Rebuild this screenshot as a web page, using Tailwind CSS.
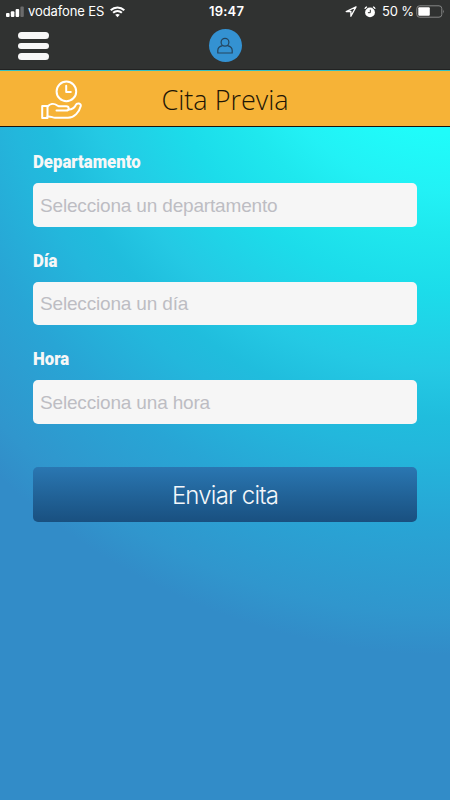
<!DOCTYPE html>
<html lang="es">

<head>
    <meta charset="UTF-8">
    <meta name="viewport" content="width=device-width, initial-scale=1.0">
    <title>Cita Previa</title>
    <script src="https://cdn.jsdelivr.net/npm/@tailwindcss/browser@4"></script>
</head>

<body class="h-[800px] overflow-hidden bg-[radial-gradient(circle_660px_at_450px_-5px,#1ffcfa_0%,#1ffcfa_21%,#22f1f5_30%,#1fe8ee_36%,#1cdcea_45%,#24c9e4_57%,#20bddd_64%,#23b7dc_69%,#28a5d5_80%,#3096cd_94%,#328cc8_100%)] font-['Inter','Liberation_Sans',sans-serif]">
    <header class="h-[70px] bg-[#303231] border-b border-[#222]">
        <!-- Status bar -->
        <div class="relative flex h-[23px] items-center justify-between pl-[6px] pr-[5px] text-white text-[13px]">
            <div class="flex items-center">
                <svg class="mr-[4px]" width="18" height="12" viewBox="0 0 18 12" fill="#fff">
                    <rect x="0" y="7" width="3.6" height="4" rx="1" />
                    <rect x="4.8" y="5.2" width="3.6" height="5.8" rx="1" />
                    <rect x="9.6" y="3" width="3.6" height="8" rx="1" />
                    <rect x="14.4" y="0.5" width="3.4" height="10.5" rx="1" fill="#6b6b6b" />
                </svg>
                <span class="w-[76px] whitespace-nowrap tracking-[-0.1px]">vodafone ES</span>
                <svg class="ml-[6px]" width="15" height="12" viewBox="0 0 15 12" fill="none" stroke="#fff" stroke-width="2">
                    <path d="M.7 4.3C4.6.6 10.4.6 14.3 4.3" />
                    <path d="M3.1 6.8c2.6-2.3 6.2-2.3 8.8 0" />
                    <path d="M5.2 8.7c1.4-1.1 3.2-1.1 4.6 0L7.5 11.2z" fill="#fff" stroke="none" />
                </svg>
            </div>
            <span class="absolute left-[209px] font-semibold text-[13px] tracking-[0.2px]">19:47</span>
            <div class="flex items-center">
                <svg class="mr-[7px]" width="12" height="12" viewBox="0 0 12 12" fill="none" stroke="#fff" stroke-width="1.3" stroke-linejoin="round">
                    <path d="M11 .9L1.2 5.5h4.7v4.8z" />
                </svg>
                <svg class="mr-[6px]" width="12" height="12" viewBox="0 0 12 12" fill="none" stroke="#fff">
                    <circle cx="6" cy="6.4" r="4.9" fill="#fff" stroke="none" />
                    <path d="M.9 2.9Q1.4 1.2 3.1.9M11.1 2.9Q10.6 1.2 8.9.9" stroke-width="1.3" />
                    <path d="M6.3 3.7v3H3.9" stroke="#303231" />
                </svg>
                <span class="mr-[3px] w-[31px] whitespace-nowrap tracking-[-0.2px]">50 %</span>
                <svg width="29" height="13" viewBox="0 0 29 13">
                    <rect x=".8" y=".8" width="25" height="11.4" rx="2.8" fill="none" stroke="#858686" />
                    <rect x="2.3" y="2.3" width="11.5" height="8.4" rx="1" fill="#fff" />
                    <path d="M27.2 4.6q1.6 1.9 0 3.8z" fill="#858686" />
                </svg>
            </div>
        </div>

        <!-- Nav -->
        <div class="relative flex h-[45px] items-center justify-center">
            <button class="absolute left-[18px] top-[9px] flex flex-col gap-[4px]">
                <span class="h-[6.5px] w-[31px] rounded-full bg-[#f7f7f7]"></span>
                <span class="h-[6.5px] w-[31px] rounded-full bg-[#f7f7f7]"></span>
                <span class="h-[6.5px] w-[31px] rounded-full bg-[#f7f7f7]"></span>
            </button>
            <div class="flex size-[33px] items-center justify-center rounded-full bg-[#3492d2]">
                <svg width="16" height="18" viewBox="0 0 16 18" fill="none" stroke="#24445d" stroke-width="1.2">
                    <circle cx="8" cy="5.2" r="3.9" />
                    <path d="M5.5 8.6C2.5 9.4.8 11 .8 13.4v2.6h14.4V13.4c0-2.4-1.7-4-4.7-4.8" />
                </svg>
            </div>
        </div>
    </header>

    <!-- Title -->
    <div class="relative flex h-[57px] items-center justify-center border-t-[1.5px] border-t-[#35c0c2] border-b border-b-[#1b1410] bg-[#f6b337]">
        <svg class="absolute left-[41px] top-[8.5px]" width="41" height="40" viewBox="0 0 41 40" fill="none" stroke="#fff" stroke-width="2" stroke-linejoin="round" stroke-linecap="round">
            <circle cx="25.4" cy="11.4" r="9.8" />
            <path d="M25.2 5.8v6.1h4.6" />
            <path d="M1.2 26h5.3v12H1.2z" />
            <path d="M6.5 26.5C9 23.8 12.8 23 16 25.3l2 1h7.2c3.3 0 3.3 4.3 0 4.3h-9.7" />
            <path d="M28 29.5c3-.2 5.2-1.7 6.5-4.1 1.4-2.8 6-2.3 5.2.9C38.2 32 33.5 37.7 27 37.8H14c-2.3 0-4.5-1.8-7.5-1.3" />
        </svg>
        <h1 class="pt-[4px] font-['Open_Sans'] text-[27px] font-light text-[#1f1606]">Cita Previa</h1>
    </div>

    <form class="flex flex-col px-[33px] pt-[24px]">
        <label class="h-[32px] origin-left scale-x-[0.93] font-['Roboto'] text-[18px] leading-[22px] font-black text-[#f7f7f7]">Departamento</label>
        <div class="mb-[23px] flex h-[43.5px] items-center rounded-[5px] bg-[#f6f6f6] pl-[7px] pt-[2px] font-['Liberation_Sans'] text-[19px] tracking-[-0.17px] text-[#bdbdc3]">Selecciona un departamento</div>
        <label class="h-[32px] origin-left scale-x-[0.93] font-['Roboto'] text-[18px] leading-[22px] font-black text-[#f7f7f7]">Día</label>
        <div class="mb-[23px] flex h-[43.5px] items-center rounded-[5px] bg-[#f6f6f6] pl-[7px] pt-[2px] font-['Liberation_Sans'] text-[19px] tracking-[-0.17px] text-[#bdbdc3]">Selecciona un día</div>
        <label class="h-[32px] origin-left scale-x-[0.93] font-['Roboto'] text-[18px] leading-[22px] font-black text-[#f7f7f7]">Hora</label>
        <div class="mb-[43.5px] flex h-[43.5px] items-center rounded-[5px] bg-[#f6f6f6] pl-[7px] pt-[2px] font-['Liberation_Sans'] text-[19px] tracking-[-0.17px] text-[#bdbdc3]">Selecciona una hora</div>
        <button type="button" class="h-[54.5px] rounded-[5px] bg-linear-to-b from-[#2a77b2] to-[#195080] pt-[3px] text-[24px] font-light tracking-[-0.8px] text-[#f4f7fa]">Enviar cita</button>
    </form>
</body>

</html>
